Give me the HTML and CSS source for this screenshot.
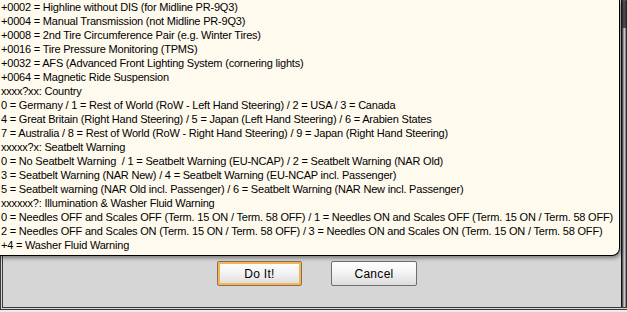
FILE: index.html
```html
<!DOCTYPE html>
<html lang="en">
<head>
<meta charset="UTF-8">
<title>Coding Help</title>
<link rel="stylesheet" href="styles.css">
</head>
<body>

<div class="window">
    <div class="panel">
        <div class="buttons">
            <button class="btn default">Do It!</button>
            <button class="btn">Cancel</button>
        </div>
    </div>
    <div class="rail"><div class="thumb"></div></div>

    <div class="tooltip">
        <div>+0002 = Highline without DIS (for Midline PR-9Q3)</div>
        <div>+0004 = Manual Transmission (not Midline PR-9Q3)</div>
        <div>+0008 = 2nd Tire Circumference Pair (e.g. Winter Tires)</div>
        <div>+0016 = Tire Pressure Monitoring (TPMS)</div>
        <div>+0032 = AFS (Advanced Front Lighting System (cornering lights)</div>
        <div>+0064 = Magnetic Ride Suspension</div>
        <div>xxxx?xx: Country</div>
        <div>0 = Germany / 1 = Rest of World (RoW - Left Hand Steering) / 2 = USA / 3 = Canada</div>
        <div>4 = Great Britain (Right Hand Steering) / 5 = Japan (Left Hand Steering) / 6 = Arabien States</div>
        <div>7 = Australia / 8 = Rest of World (RoW - Right Hand Steering) / 9 = Japan (Right Hand Steering)</div>
        <div>xxxxx?x: Seatbelt Warning</div>
        <div>0 = No Seatbelt Warning &nbsp;/ 1 = Seatbelt Warning (EU-NCAP) / 2 = Seatbelt Warning (NAR Old)</div>
        <div>3 = Seatbelt Warning (NAR New) / 4 = Seatbelt Warning (EU-NCAP incl. Passenger)</div>
        <div>5 = Seatbelt warning (NAR Old incl. Passenger) / 6 = Seatbelt Warning (NAR New incl. Passenger)</div>
        <div>xxxxxx?: Illumination &amp; Washer Fluid Warning</div>
        <div>0 = Needles OFF and Scales OFF (Term. 15 ON / Term. 58 OFF) / 1 = Needles ON and Scales OFF (Term. 15 ON / Term. 58 OFF)</div>
        <div>2 = Needles OFF and Scales ON (Term. 15 ON / Term. 58 OFF) / 3 = Needles ON and Scales ON (Term. 15 ON / Term. 58 OFF)</div>
        <div>+4 = Washer Fluid Warning</div>
    </div>
</div>

</body>
</html>
```

FILE: styles.css
```css
body {
    margin: 0;
    padding: 0;
    width: 627px;
    height: 312px;
    overflow: hidden;
    background-color: #ececec;
    font-family: Tahoma, "Liberation Sans", Arial, sans-serif;
}
.window {
    position: relative;
    display: flex;
    height: 310px;
    box-sizing: border-box;
    border-left: 3px double #3a3a3a;
    border-bottom: 3px double #3a3a3a;
    background-color: #d6d6d6;
}
.panel {
    flex: 1;
    display: flex;
    flex-direction: column;
    justify-content: flex-end;
    padding-bottom: 21px;
}
.buttons {
    display: flex;
    gap: 29px;
    padding-left: 214px;
}
.btn {
    width: 85px;
    height: 25px;
    padding: 0;
    font-family: Tahoma, "Liberation Sans", Arial, sans-serif;
    font-size: 12px;
    letter-spacing: 0.3px;
    color: #000;
    border: 1px solid #6e6e6e;
    border-radius: 2px;
    background: linear-gradient(#ffffff, #f4f4f4 45%, #dcdcdc);
    cursor: pointer;
}
.btn + .btn {
    width: 86px;
}
.btn.default {
    border-color: #8a7050;
    box-shadow: inset 0 0 0 2px #f5b457;
}
.rail {
    width: 6px;
    background: linear-gradient(90deg, #111 0, #111 1px, #555 1px, #555 2px, #9a9a9a 2px, #9a9a9a 3px, #c8c8c8 3px, #c8c8c8 4px, #8c8c8c 4px, #8c8c8c 5px, #303030 5px);
}
.thumb {
    height: 28px;
    border-radius: 4px 4px 0 0;
    background: linear-gradient(90deg, #111, #555 50%, #222);
}
.tooltip {
    position: absolute;
    top: 0;
    left: -3px;
    width: 620px;
    height: 256px;
    padding-left: 1px;
    box-sizing: border-box;
    background-color: #fffaee;
    border-right: 1px solid #000;
    border-bottom: 1px solid #000;
    border-bottom-right-radius: 8px;
    box-shadow: 1px 2px 4px rgba(0, 0, 0, 0.45);
    font-size: 11px;
    letter-spacing: -0.2px;
    line-height: 14px;
    color: #000;
    white-space: nowrap;
    overflow: hidden;
}
```
